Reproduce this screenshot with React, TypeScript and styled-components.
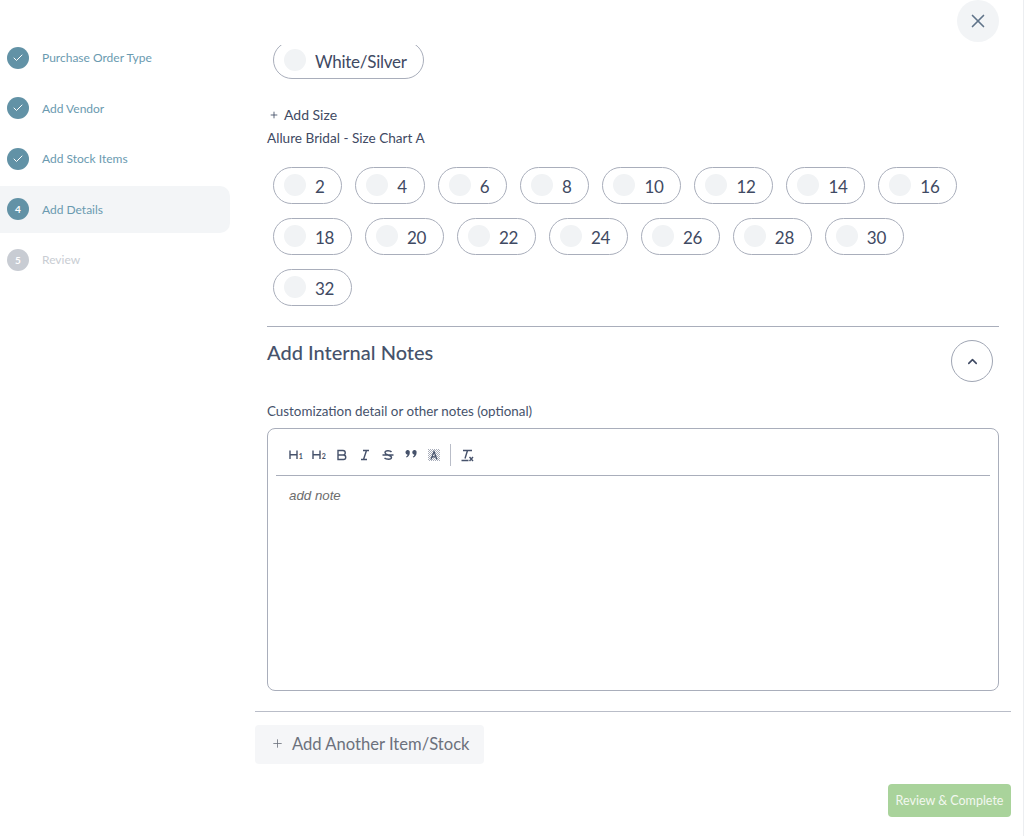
import React from "react";
import styled, { createGlobalStyle } from "styled-components";
import { X, Check, Plus, ChevronUp } from "lucide-react";

const Global = createGlobalStyle`
  html, body { margin: 0; padding: 0; background: #fff; }
  body { font-family: "Lato", "Open Sans", sans-serif; }
  * { box-sizing: border-box; }
`;

const Page = styled.div`
  width: 1024px; height: 836px; display: flex; overflow: hidden;
  border-right: 1px solid #eceef1; color: #3f4a63;
`;
const Sidebar = styled.nav`
  width: 230px; flex: none; padding-top: 34px; display: flex; flex-direction: column; gap: 3px;
`;
const Step = styled.div<{ $active?: boolean }>`
  height: 47.5px; display: flex; align-items: center; gap: 13px; padding-left: 7px;
  border-radius: 0 10px 10px 0;
  background: ${(p) => (p.$active ? "#f3f5f7" : "transparent")};
`;
const Badge = styled.span<{ $off?: boolean }>`
  width: 22px; height: 22px; border-radius: 50%; flex: none;
  display: flex; align-items: center; justify-content: center;
  background: ${(p) => (p.$off ? "#c8ccd3" : "#6292a6")};
  color: #fff; font-size: 10px; font-weight: 700;
`;
const StepLabel = styled.span<{ $off?: boolean }>`
  font-size: 12px; color: ${(p) => (p.$off ? "#c9cdd3" : "#6a9ab0")};
`;
const Main = styled.main`
  width: 793px; flex: none; display: flex; flex-direction: column;
`;
const TopBar = styled.div`
  height: 45px; flex: none; display: flex; justify-content: flex-end; padding-right: 24px;
`;
const CloseBtn = styled.button`
  width: 42px; height: 42px; border: 0; border-radius: 50%; background: #f2f4f6; color: #5f7389;
  display: flex; align-items: center; justify-content: center; padding: 0;
`;
const Content = styled.div`
  width: 756px; margin-left: 25px; display: flex; flex-direction: column; overflow: hidden; flex: 1;
`;
const Inner = styled.div`
  padding: 0 12px; display: flex; flex-direction: column;
`;
const Pills = styled.div<{ $top?: number }>`
  display: flex; flex-wrap: wrap; column-gap: 13px; row-gap: 13.5px; padding-left: 6px; width: 700px;
  margin-top: ${(p) => p.$top ?? 0}px;
`;
const Pill = styled.label`
  height: 37.5px; border: 1px solid #a9aebb; border-radius: 19px; display: flex; align-items: center;
  padding: 0 16.75px 0 10px; gap: 9px; font-size: 17px; letter-spacing: -0.015em; color: #3f4a63;
`;
const Dot = styled.span`
  width: 22px; height: 22px; border-radius: 50%; background: #f1f3f5; flex: none;
`;
const PillText = styled.span`
  line-height: 1; padding-top: 2.5px;
`;
const AddSize = styled.div`
  margin-top: 26px; margin-left: 2px; display: flex; align-items: center; gap: 5px; font-size: 14px; height: 20px;
`;
const ChartName = styled.div`
  margin-top: 4px; font-size: 13.6px; height: 18px; line-height: 18px; margin-bottom: 20px;
`;
const Rule = styled.hr`
  width: 100%; height: 1px; border: 0; margin: 0; background: #a9aebb;
`;
const SectionRule = styled(Rule)`
  margin-top: 20px;
`;
const NotesHead = styled.div`
  height: 65px; display: flex; justify-content: space-between; align-items: flex-start;
`;
const NotesTitle = styled.h2`
  margin: 13px 0 0; font-size: 20px; font-weight: 500; line-height: 24px; color: #46526b;
`;
const Collapse = styled.button`
  width: 42px; height: 42px; margin: 13px 6px 0 0; border-radius: 50%; border: 1px solid #a0a6b4; background: #fff;
  color: #3f4a63; display: flex; align-items: center; justify-content: center; padding: 0;
`;
const FieldLabel = styled.div`
  margin-top: 10px; font-size: 13.4px; height: 18px; line-height: 18px; color: #46526b;
`;
const Editor = styled.div`
  margin-top: 8px; height: 263px; border: 1px solid #a9aebb; border-radius: 8px; padding: 0 8px;
`;
const Toolbar = styled.div`
  height: 47px; border-bottom: 1px solid #a9aebb; display: flex; align-items: center; padding: 6px 13px 0; gap: 9px;
`;
const Sep = styled.span`
  width: 1px; height: 22px; background: #b9bdc8;
`;
const Placeholder = styled.div`
  padding: 12px 13px 0; font: italic 13.3px "Liberation Sans", Arial, sans-serif; color: #6d6d6d; line-height: 15px;
`;
const OuterRule = styled(Rule)`
  margin-top: 20px; background: #b9bdc8;
`;
const AddItem = styled.button`
  margin-top: 13px; width: 229px; height: 39px; border: 0; border-radius: 4px; background: #f5f6f8; color: #6c717c;
  display: flex; align-items: center; padding: 0 0 2px 16px; gap: 8px; font: 400 16.6px "Lato", sans-serif;
`;
const Footer = styled.div`
  display: flex; justify-content: flex-end; margin-top: 20px;
`;
const Submit = styled.button`
  width: 123px; height: 33px; border: 0; border-radius: 4px; background: #a9d39b; color: #f3f8f0;
  font: 400 12.5px "Lato", sans-serif; padding: 0;
`;
const Glyph = styled.svg`
  width: 14px; height: 14px; flex: none; fill: none; stroke: #46526b; stroke-width: 1.4;
`;
const Digit = styled.text`
  fill: #46526b; stroke: none; font-family: "Lato", sans-serif; font-size: 7px; font-weight: 700;
`;

const steps = [
  { label: "Purchase Order Type", done: true },
  { label: "Add Vendor", done: true },
  { label: "Add Stock Items", done: true },
  { label: "Add Details", n: 4, active: true },
  { label: "Review", n: 5, off: true },
];
const sizes = [2, 4, 6, 8, 10, 12, 14, 16, 18, 20, 22, 24, 26, 28, 30, 32];

const Tools = () => (
  <Toolbar>
    <Glyph viewBox="0 0 14 14"><path d="M1 2.500v8.500M8 2.500v8.500M1 6.700h7" /><Digit x="9.800" y="11">1</Digit></Glyph>
    <Glyph viewBox="0 0 14 14"><path d="M1 2.500v8.500M8 2.500v8.500M1 6.700h7" /><Digit x="9.800" y="11">2</Digit></Glyph>
    <Glyph viewBox="0 0 14 14"><path d="M3 2.500h5a2.200 2.200 0 0 1 0 4.500H3zM3 7h5.500a2.200 2.200 0 0 1 0 4.500H3zM3 2v10" /></Glyph>
    <Glyph viewBox="0 0 14 14"><path d="M5 2.500h6M3 11.500h6M8.500 2.500l-3 9" /></Glyph>
    <Glyph viewBox="0 0 14 14"><path d="M10.500 4C9.500 2.500 4 2 4 4.800 4 7 10.500 7 10.500 9.500 10.500 12 5 11.500 3.500 10M1.500 7h11" /></Glyph>
    <Glyph viewBox="0 0 14 14">
      <path d="M3.200 2a2.400 2.400 0 0 1 2.600 2.600C5.800 7 4.600 8.800 2.600 9.600L2 8.700c1-.6 1.500-1.300 1.600-2A2.400 2.400 0 0 1 3.200 2zM10 2a2.400 2.400 0 0 1 2.600 2.600c0 2.400-1.200 4.200-3.200 5l-.6-.9c1-.6 1.500-1.300 1.600-2A2.400 2.400 0 0 1 10 2z" fill="#46526b" stroke="none" />
    </Glyph>
    <Glyph viewBox="0 0 14 14">
      <defs>
        <pattern id="dither" width="2" height="2" patternUnits="userSpaceOnUse">
          <rect width="1" height="1" fill="#a9aebb" stroke="none" />
          <rect x="1" y="1" width="1" height="1" fill="#a9aebb" stroke="none" />
        </pattern>
      </defs>
      <rect x="1" y="1" width="12" height="12" fill="url(#dither)" stroke="none" />
      <path d="M4 11.500l3-8 3 8M5 8.800h4" strokeWidth="1.200" />
    </Glyph>
    <Sep />
    <Glyph viewBox="0 0 14 14"><path d="M3 2.500h9M7.500 2.500l-2.500 8M1.500 12.500h7M9.500 9l3.500 4M13 9l-3.500 4" /></Glyph>
  </Toolbar>
);

export default function App() {
  return (
    <Page>
      <Global />
      <Sidebar>
        {steps.map((s) => (
          <Step key={s.label} $active={s.active}>
            <Badge $off={s.off}>{s.done ? <Check size={12} strokeWidth={2} /> : s.n}</Badge>
            <StepLabel $off={s.off}>{s.label}</StepLabel>
          </Step>
        ))}
      </Sidebar>
      <Main>
        <TopBar>
          <CloseBtn aria-label="Close"><X size={22} strokeWidth={1.8} /></CloseBtn>
        </TopBar>
        <Content>
          <Inner>
            <Pills $top={-4}>
              <Pill><Dot /><PillText>White/Silver</PillText></Pill>
            </Pills>
            <AddSize><Plus size={10} strokeWidth={2} />Add Size</AddSize>
            <ChartName>Allure Bridal - Size Chart A</ChartName>
            <Pills>
              {sizes.map((n) => (
                <Pill key={n}><Dot /><PillText>{n}</PillText></Pill>
              ))}
            </Pills>
            <SectionRule />
            <NotesHead>
              <NotesTitle>Add Internal Notes</NotesTitle>
              <Collapse aria-label="Collapse"><ChevronUp size={15} strokeWidth={2.5} /></Collapse>
            </NotesHead>
            <FieldLabel>Customization detail or other notes (optional)</FieldLabel>
            <Editor>
              <Tools />
              <Placeholder>add note</Placeholder>
            </Editor>
          </Inner>
          <OuterRule />
          <AddItem><Plus size={13} strokeWidth={1.5} />Add Another Item/Stock</AddItem>
          <Footer><Submit>Review &amp; Complete</Submit></Footer>
        </Content>
      </Main>
    </Page>
  );
}
